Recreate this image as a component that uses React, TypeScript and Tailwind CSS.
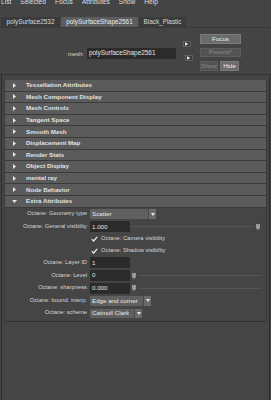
import React from 'react';

const menus = ['List', 'Selected', 'Focus', 'Attributes', 'Show', 'Help'];

const frames = [
    'Tessellation Attributes',
    'Mesh Component Display',
    'Mesh Controls',
    'Tangent Space',
    'Smooth Mesh',
    'Displacement Map',
    'Render Stats',
    'Object Display',
    'mental ray',
    'Node Behavior',
];

function Arrow({ open }: { open?: boolean }) {
    return (
        <svg width="5" height="5" viewBox="0 0 5 5" className="shrink-0">
            {open ? <polygon points="0,1 5,1 2.5,4" fill="#e6e6e6" /> : <polygon points="1,0 4,2.5 1,5" fill="#e6e6e6" />}
        </svg>
    );
}

function FrameHeader({ title, open }: { title: string; open?: boolean }) {
    return (
        <div className="flex items-center h-[11.6px] bg-[#5b5b5b] border-b border-[#3a3a3a] pl-[7px]">
            <Arrow open={open} />
            <span className="ml-[9px] text-[6.2px] font-bold text-[#e2e2e2] leading-none">{title}</span>
        </div>
    );
}

function Label({ text }: { text: string }) {
    return <div className="w-[82px] text-right text-[5.8px] text-[#d6d6d6] leading-none shrink-0">{text}</div>;
}

function Field({ value, w = 'w-[40px]' }: { value: string; w?: string }) {
    return (
        <div className={`${w} h-[11px] bg-[#2b2b2b] flex items-center pl-[2px] text-[6.2px] text-[#e6e6e6] leading-none shrink-0`}>
            {value}
        </div>
    );
}

function Dropdown({ value, w }: { value: string; w: string }) {
    return (
        <div className={`${w} h-[9.5px] bg-[#606060] flex items-center text-[6.2px] text-[#e8e8e8] leading-none shrink-0`}>
            <span className="flex-1 pl-[2px]">{value}</span>
            <span className="w-[8px] h-full border-l border-[#4a4a4a] bg-[#6a6a6a] flex items-center justify-center">
                <svg width="4" height="3" viewBox="0 0 4 3">
                    <polygon points="0,0 4,0 2,3" fill="#e6e6e6" />
                </svg>
            </span>
        </div>
    );
}

function Slider({ atStart }: { atStart?: boolean }) {
    return (
        <div className="flex-1 flex items-center h-full pr-[4px]">
            {atStart && <Handle />}
            <div className="flex-1 h-[1px] bg-[#2c2c2c] border-b border-[#555]" />
            {!atStart && <Handle />}
        </div>
    );
}

function Handle() {
    return (
        <svg width="6" height="8" viewBox="0 0 6 8" className="shrink-0 mx-[1px]">
            <path d="M0.5 0.5 H5.5 V5 L3 7.5 L0.5 5 Z" fill="#9a9a9a" stroke="#3a3a3a" strokeWidth="0.8" />
        </svg>
    );
}

function Check({ text }: { text: string }) {
    return (
        <div className="flex items-center">
            <div className="w-[82px] shrink-0" />
            <svg width="7" height="6" viewBox="0 0 7 6" className="ml-[4px]">
                <path d="M0.8 3.2 L2.6 5 L6.2 0.8" fill="none" stroke="#f0f0f0" strokeWidth="1.2" />
            </svg>
            <span className="ml-[3px] text-[5.8px] text-[#d6d6d6] leading-none">{text}</span>
        </div>
    );
}

function SmallIcon() {
    return (
        <svg width="8" height="6" viewBox="0 0 8 6">
            <rect x="0.5" y="0.5" width="7" height="5" fill="#3a3a3a" stroke="#777" strokeWidth="0.6" />
            <polygon points="2,1.2 5.5,3 2,4.8" fill="#e8e8e8" />
        </svg>
    );
}

export default function App() {
    return (
        <div className="w-[271px] h-[400px] bg-[#444444] overflow-hidden font-['Liberation_Sans',Arial,sans-serif] select-none">
            {/* menu bar, text clipped at top */}
            <div className="h-[10px] flex gap-[9px] pl-[1px] overflow-hidden">
                {menus.map((m) => (
                    <span key={m} className="text-[6.6px] text-[#dedede] leading-none mt-[-1px]">
                        {m}
                    </span>
                ))}
            </div>

            <div className="h-[7px]" />

            {/* tabs */}
            <div className="flex h-[11px] pl-[1px] gap-[1px] border-b border-[#3a3a3a]">
                <div className="w-[59px] bg-[#3b3b3b] flex items-center justify-center text-[6.4px] text-[#d8d8d8] leading-none">polySurface2532</div>
                <div className="w-[77px] bg-[#5d5d5d] flex items-center justify-center text-[6.4px] text-[#ececec] leading-none">polySurfaceShape2561</div>
                <div className="w-[47px] bg-[#3b3b3b] flex items-center justify-center text-[6.4px] text-[#d8d8d8] leading-none">Black_Plastic</div>
            </div>

            {/* mesh row */}
            <div className="h-[47px] flex pt-[6px] border-b border-[#333]">
                <div className="flex items-center self-center mt-[-1px]">
                    <div className="w-[84px] text-right text-[6px] text-[#d6d6d6] leading-none">mesh:</div>
                    <div className="ml-[3px] w-[89px] h-[11px] bg-[#2b2b2b] flex items-center pl-[2px] text-[6.4px] text-[#e6e6e6] leading-none">
                        polySurfaceShape2561
                    </div>
                </div>
                <div className="ml-[7px] w-[12px] flex flex-col pt-[7px]">
                    <SmallIcon />
                    <div className="ml-[2px] mt-[8px]">
                        <SmallIcon />
                    </div>
                </div>
                <div className="ml-[5px] w-[41px] flex flex-col gap-[4px]">
                    <div className="h-[9.5px] bg-[#6b6b6b] border border-[#7a7a7a] flex items-center justify-center text-[6.2px] text-[#eeeeee] leading-none">Focus</div>
                    <div className="h-[9.5px] bg-[#535353] border border-[#5e5e5e] flex items-center justify-center text-[6.2px] text-[#8a8a8a] leading-none">Presets*</div>
                    <div className="flex gap-[2px]">
                        <div className="w-[18px] h-[9.5px] bg-[#535353] border border-[#5e5e5e] flex items-center justify-center text-[6.2px] text-[#8a8a8a] leading-none">Show</div>
                        <div className="w-[19px] h-[9.5px] bg-[#6b6b6b] border border-[#7a7a7a] flex items-center justify-center text-[6.2px] text-[#eeeeee] leading-none">Hide</div>
                    </div>
                </div>
            </div>

            {/* frames panel */}
            <div className="ml-[1px] mr-[1px] h-[400px] border-l border-r border-[#2c2c2c] bg-[#454545] pt-[5px] px-[1px]">
                <div className="border-l border-r border-[#3a3a3a] mx-[1px]">
                    {frames.map((f) => (
                        <FrameHeader key={f} title={f} />
                    ))}
                    <FrameHeader title="Extra Attributes" open />

                    <div className="border-b border-[#333] pb-[1px]">
                        <div className="h-[13px] flex items-center">
                            <Label text="Octane: Geometry type" />
                            <div className="ml-[3px]">
                                <Dropdown value="Scatter" w="w-[66px]" />
                            </div>
                        </div>
                        <div className="h-[12.5px] flex items-center">
                            <Label text="Octane: General visibility" />
                            <div className="ml-[3px]">
                                <Field value="1.000" />
                            </div>
                            <Slider />
                        </div>
                        <div className="h-[12px] flex items-center">
                            <Check text="Octane: Camera visibility" />
                        </div>
                        <div className="h-[11.5px] flex items-center">
                            <Check text="Octane: Shadow visibility" />
                        </div>
                        <div className="h-[12.5px] flex items-center">
                            <Label text="Octane: Layer ID" />
                            <div className="ml-[3px]">
                                <Field value="1" />
                            </div>
                        </div>
                        <div className="h-[13px] flex items-center">
                            <Label text="Octane: Level" />
                            <div className="ml-[3px]">
                                <Field value="0" />
                            </div>
                            <Slider atStart />
                        </div>
                        <div className="h-[12.5px] flex items-center">
                            <Label text="Octane: sharpness" />
                            <div className="ml-[3px]">
                                <Field value="0.000" />
                            </div>
                            <Slider atStart />
                        </div>
                        <div className="h-[12.5px] flex items-center">
                            <Label text="Octane: bound. interp." />
                            <div className="ml-[3px]">
                                <Dropdown value="Edge and corner" w="w-[61px]" />
                            </div>
                        </div>
                        <div className="h-[12.5px] flex items-center">
                            <Label text="Octane: scheme" />
                            <div className="ml-[3px]">
                                <Dropdown value="Catmull Clark" w="w-[52px]" />
                            </div>
                        </div>
                    </div>
                </div>
            </div>
        </div>
    );
}
